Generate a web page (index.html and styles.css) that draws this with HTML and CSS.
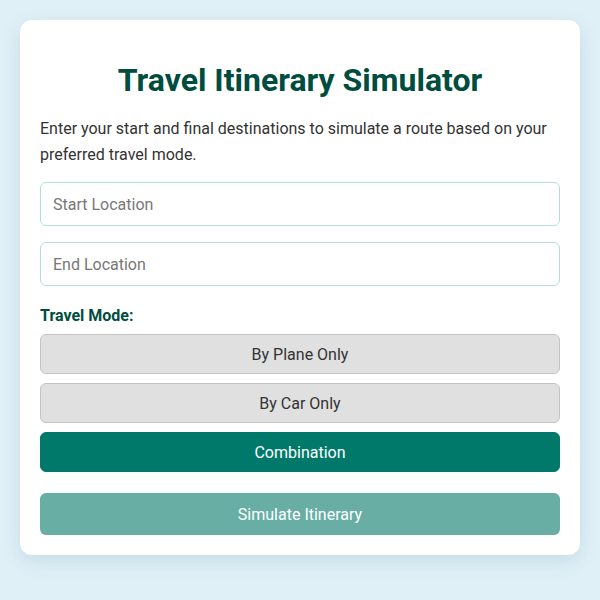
FILE: index.html
```html
<!DOCTYPE html>
<html lang="en">
<head>
<meta charset="utf-8">
<title>Travel Itinerary Simulator</title>
<link rel="stylesheet" href="styles.css">
</head>
<body>
<div class="card">
  <h1 class="title">Travel Itinerary Simulator</h1>
  <p class="intro">Enter your start and final destinations to simulate a route based on your preferred travel mode.</p>
  <input class="field" type="text" placeholder="Start Location">
  <input class="field" type="text" placeholder="End Location">
  <div class="mode-label">Travel Mode:</div>
  <div class="modes">
    <button class="mode">By Plane Only</button>
    <button class="mode">By Car Only</button>
    <button class="mode active">Combination</button>
  </div>
  <button class="submit">Simulate Itinerary</button>
</div>
</body>
</html>
```

FILE: styles.css
```css
* { box-sizing: border-box; }
html, body { margin: 0; }
body {
  background: #e0f0f7;
  font-family: Roboto, "Noto Sans", sans-serif;
  padding: 20px;
  min-height: 600px;
}
.card {
  background: #fff;
  border-radius: 12px;
  box-shadow: 0 6px 20px rgba(0, 80, 100, 0.12);
  padding: 40px 20px 20px;
  display: flex;
  flex-direction: column;
}
.title {
  margin: 0 0 16px;
  text-align: center;
  color: #004d40;
  font-size: 32px;
  font-weight: 700;
  line-height: 40px;
}
.intro {
  margin: 0 0 14px;
  color: #333;
  font-size: 16px;
  line-height: 26px;
}
.field {
  height: 44px;
  border: 1px solid #b2dfdb;
  border-radius: 6px;
  padding: 0 12px;
  font-family: inherit;
  font-size: 16px;
  color: #333;
  margin-bottom: 16px;
  outline: none;
}
.field::placeholder { color: #777; }
.mode-label {
  color: #004d40;
  font-weight: 700;
  font-size: 16px;
  line-height: 20px;
  margin: 4px 0 8px;
}
.modes {
  display: flex;
  flex-direction: column;
  gap: 9px;
  margin-bottom: 21px;
}
.mode {
  height: 40px;
  border: 1px solid #c4c4c4;
  border-radius: 6px;
  background: #e0e0e0;
  color: #333;
  font-family: inherit;
  font-size: 16px;
  cursor: pointer;
}
.mode.active {
  background: #00796b;
  border-color: #00796b;
  color: #fff;
}
.submit {
  height: 42px;
  border: none;
  border-radius: 6px;
  background: #68aea5;
  color: #fff;
  font-family: inherit;
  font-size: 16px;
}
```
